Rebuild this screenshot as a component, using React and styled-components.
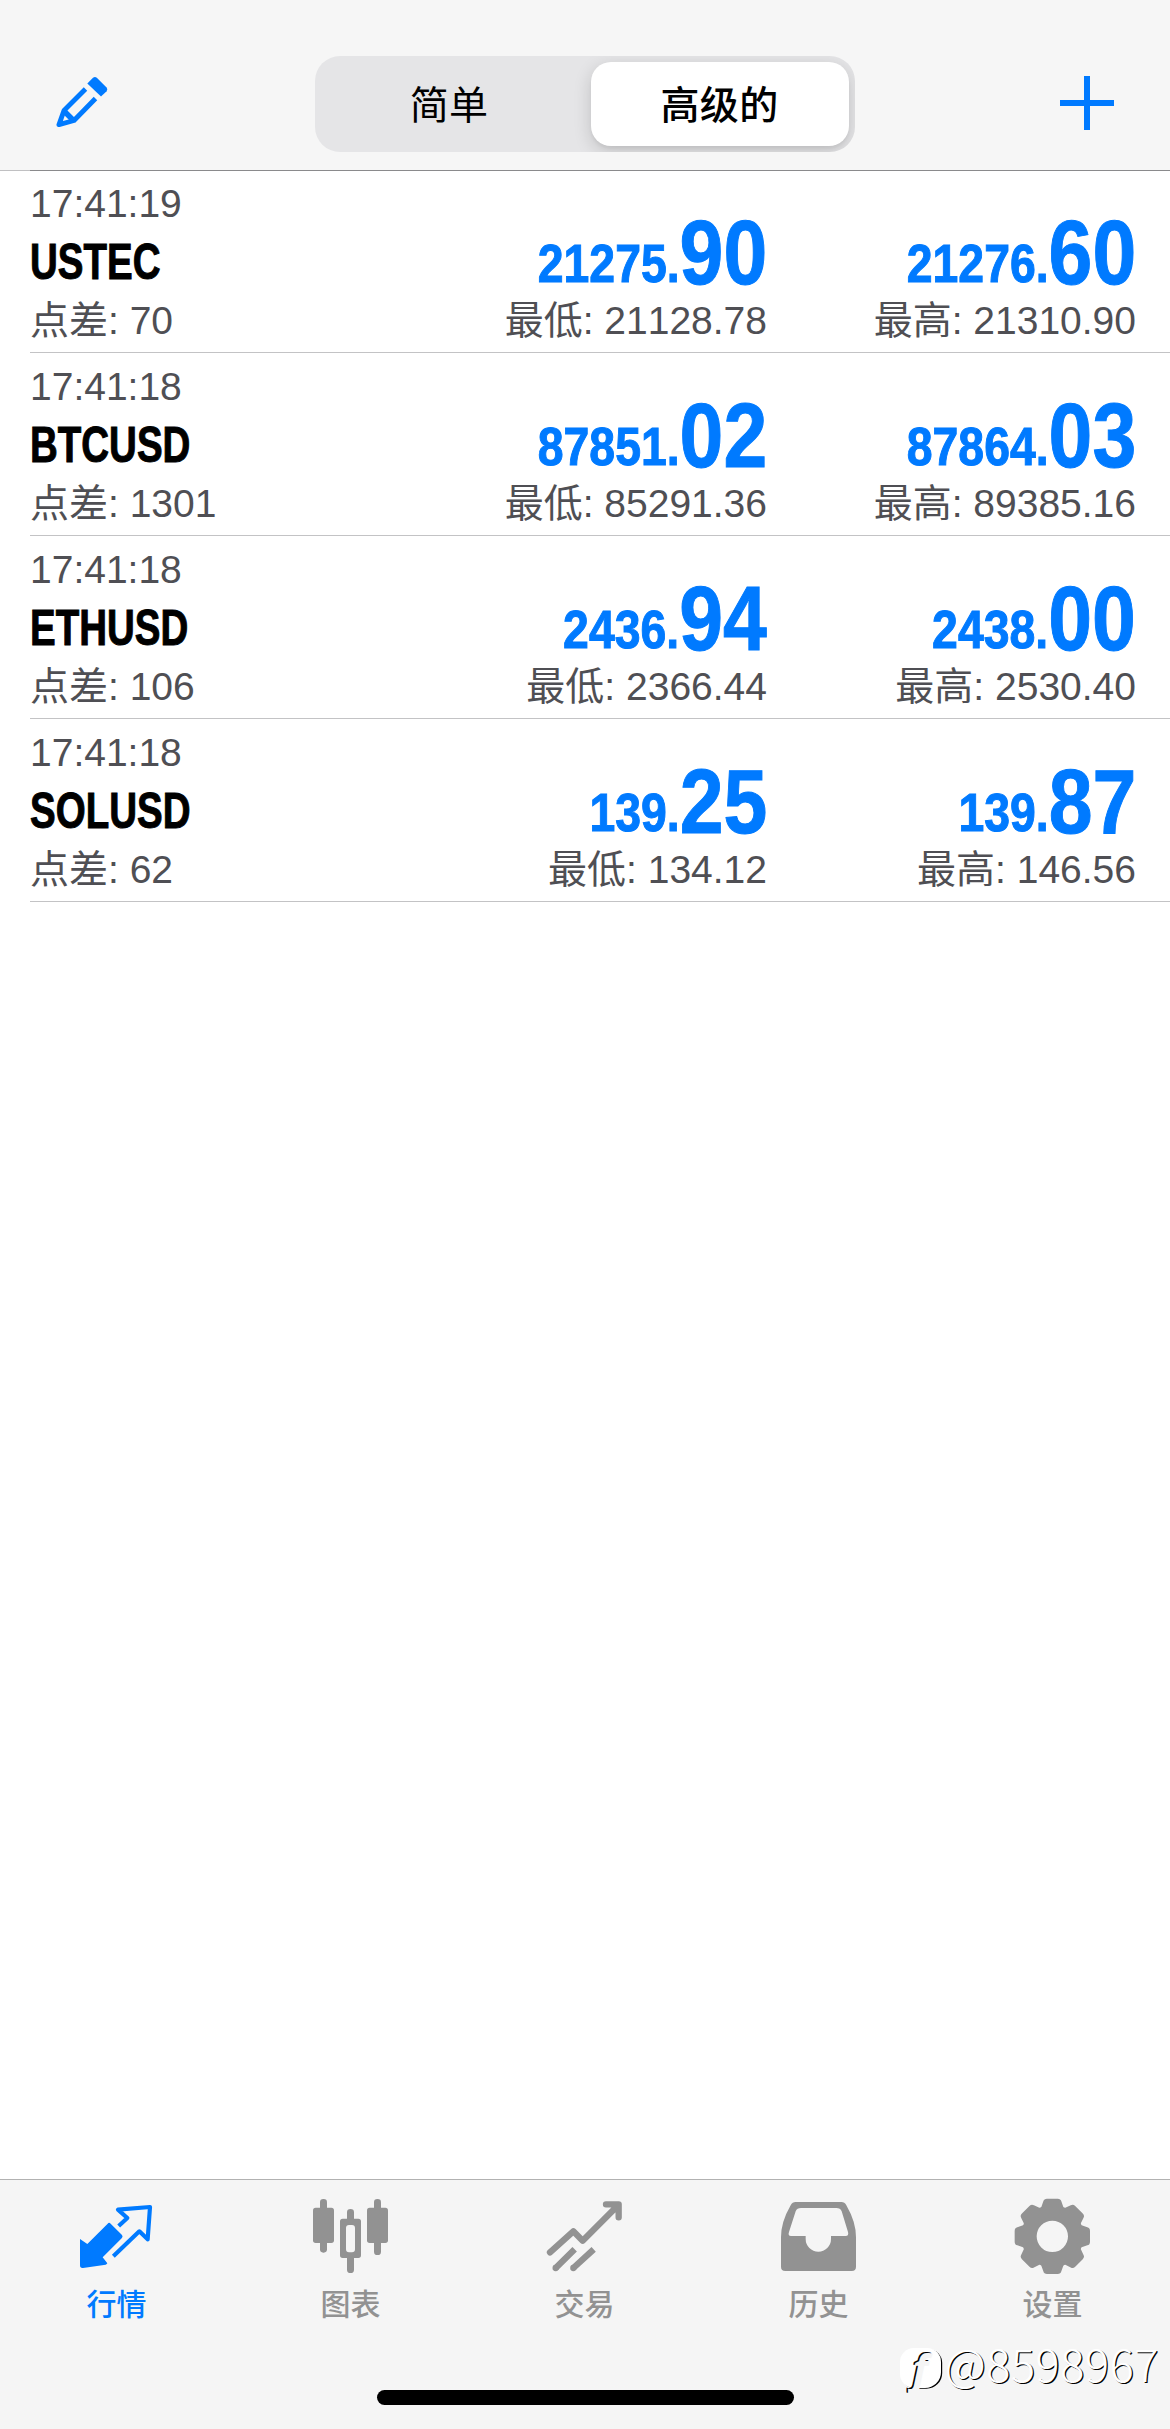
import React from "react";
import styled, { createGlobalStyle } from "styled-components";

const BLUE = "#007aff";
const GREY = "#929292";

const GlobalStyle = createGlobalStyle`
  * { box-sizing: border-box; }
  body {
    margin: 0;
    background: #fff;
    font-family: "Liberation Sans", "Noto Sans CJK SC", sans-serif;
    font-kerning: none;
  }
`;

const Screen = styled.div`
  position: relative;
  display: flex;
  flex-direction: column;
  width: 1170px;
  height: 2429px;
  overflow: hidden;
  background: #fff;
`;

const Header = styled.header`
  display: grid;
  grid-template-columns: 1fr 540px 1fr;
  align-items: center;
  height: 170px;
  padding: 38px 56px 0;
  background: #f6f6f6;
`;

const IconButton = styled.button`
  display: flex;
  justify-self: ${(p) => p.$align};
  padding: 0 0 2px;
  border: 0;
  background: none;
  color: ${BLUE};
`;

const Segmented = styled.div`
  display: grid;
  grid-template-columns: 1fr 258px;
  height: 96px;
  padding: 6px;
  border-radius: 25px;
  background: #e5e5e7;
  overflow: hidden;
`;

const Segment = styled.div`
  display: flex;
  align-items: center;
  justify-content: center;
  padding: 0 ${(p) => (p.$active ? 1 : 14)}px 3px 0;
  border-radius: 20px;
  background: ${(p) => (p.$active ? "#fff" : "transparent")};
  box-shadow: ${(p) => (p.$active ? "0 5px 18px rgba(0,0,0,.16), 0 3px 3px rgba(0,0,0,.04)" : "none")};
  font: ${(p) => (p.$active ? 500 : 400)} 39px/1 "Noto Sans CJK SC", sans-serif;
  letter-spacing: 0.3px;
  color: #000;
`;

const List = styled.main`
  display: flex;
  flex-direction: column;
  flex: 1;
  background: linear-gradient(90deg, #c0c0c2 30px, #8a8a8c 30px) top / 100% 1px no-repeat;
  padding-top: 1px;
`;

const Row = styled.article`
  display: grid;
  grid-template-columns: 1fr 369px 369px;
  height: ${(p) => (p.$first ? 182 : 183)}px;
  margin-left: 30px;
  padding-right: 34px;
  border-bottom: 1px solid #c3c3c5;
`;

const Cell = styled.div`
  display: flex;
  flex-direction: column;
  align-items: ${(p) => (p.$right ? "flex-end" : "flex-start")};
  justify-content: flex-end;
  padding-bottom: 6px;
  white-space: nowrap;
`;

const Meta = styled.span`
  font-size: 39px;
  line-height: 50px;
  color: #4f4f54;
`;

const Name = styled.span`
  height: 67px;
  font-size: 50px;
  font-weight: 700;
  line-height: 67px;
  color: #000;
  -webkit-text-stroke: 1px #000;
  transform: scaleX(0.77);
  transform-origin: left;
`;

const Price = styled.span`
  height: 64px;
  font-size: 53px;
  font-weight: 700;
  line-height: 64px;
  color: ${BLUE};
  -webkit-text-stroke: 1px ${BLUE};
  transform: scaleX(0.875);
  transform-origin: right;
`;

const Pips = styled.span`
  font-size: 90px;
  line-height: 1px;
  vertical-align: -2px;
`;

const TabBar = styled.nav`
  display: grid;
  grid-template-columns: repeat(5, 1fr);
  height: 250px;
  padding-top: 16px;
  border-top: 1px solid #b2b2b2;
  background: #f5f5f5;
`;

const Tab = styled.div`
  display: flex;
  flex-direction: column;
  align-items: center;
  color: ${(p) => (p.$active ? BLUE : GREY)};
`;

const TabLabel = styled.span`
  margin-top: 5px;
  padding-right: 1px;
  font: 500 30px/34px "Noto Sans CJK SC", sans-serif;
`;

const HomeIndicator = styled.div`
  position: absolute;
  left: 377px;
  bottom: 24px;
  width: 417px;
  height: 15px;
  border-radius: 8px;
  background: #000;
`;

const Watermark = styled.div`
  position: absolute;
  right: 11px;
  bottom: 37px;
  display: flex;
  align-items: center;
  gap: 4px;
  height: 48px;
  font: 300 45px/48px "Noto Sans CJK SC", sans-serif;
  color: #fff;
  text-shadow: 1.3px 1.3px 0 #000;
`;

const Handle = styled.span`
  padding-bottom: 10px;
  letter-spacing: 0.6px;
`;

const Badge = styled.span`
  display: flex;
  align-items: center;
  justify-content: center;
  width: 41px;
  height: 40px;
  border-radius: 14px 14px 16px 14px;
  background: #fff;
  box-shadow: 1.5px 1px 0 -0.3px #000;
  font: italic 700 42px/40px "Open Sans", sans-serif;
  color: #f5f5f5;
  text-shadow: -1.3px -1px 0 #000;
`;

const PencilIcon = () => (
  <svg width="52" height="54" viewBox="56 76 52 54" fill="none">
    <path d="M87.3 83.500 93 77.800Q95 76.400 96.800 77.800L106.600 87.600Q108 89.400 106.600 91.200L101 96.600Z" fill="currentColor" />
    <path d="M85.500 89 64 110.500 59 124.600 74 120.500 95.500 98.500" stroke="currentColor" strokeWidth="4.900" strokeLinejoin="round" />
    <path d="M64 111 74 121" stroke="currentColor" strokeWidth="5.500" />
  </svg>
);

const PlusIcon = () => (
  <svg width="54" height="54" viewBox="0 0 54 54" fill="currentColor">
    <path d="M24 0h6v24h24v6H30v24h-6V30H0v-6h24z" />
  </svg>
);

const TabSvg = ({ children }) => (
  <svg width="84" height="84" viewBox="0 0 252 252" fill="currentColor">{children}</svg>
);

const QuotesIcon = () => (
  <TabSvg>
    <path d="M15 129 37 144 98 83Q102 78 107 83L141 117Q145 122 140 127L83 184 97 202Q96 205 92 206L24 216Q15 217 15 208Z" />
    <path d="M131 90 157 66 129 41 225 33 218 130 193 106 115 181" fill="none" stroke="currentColor" strokeWidth="12.500" strokeLinejoin="round" />
  </TabSvg>
);

const ChartIcon = () => (
  <TabSvg>
    <rect x="12" y="35" width="63" height="106" rx="8" />
    <rect x="33" y="9" width="21" height="161" rx="10" />
    <path fillRule="evenodd" d="M101 68H148Q156 68 156 76V178Q156 186 148 186H101Q93 186 93 178V76Q93 68 101 68ZM120 87Q111 87 111 96V160Q111 169 120 169H129Q138 169 138 160V96Q138 87 129 87Z" />
    <path d="M114 75V49Q114 39 124.500 39T135 49V75ZM114 180V221Q114 231 124.500 231T135 221V180Z" />
    <rect x="174" y="35" width="63" height="106" rx="8" />
    <rect x="195" y="9" width="21" height="168" rx="10" />
  </TabSvg>
);

const TradeIcon = () => (
  <TabSvg>
    <g fill="none" stroke="currentColor" strokeWidth="19">
      <path d="M21 169 91 106 119 134 226 27M189 25H227V64" strokeLinecap="round" strokeLinejoin="round" />
      <path d="M38 216 95 160M91 216 152 160" />
    </g>
    <circle cx="38" cy="216" r="9.500" />
    <circle cx="91" cy="216" r="9.500" />
  </TabSvg>
);

const HistoryIcon = () => (
  <TabSvg>
    <path fillRule="evenodd" d="M56 18H193Q203 18 208 28Q237 78 237 124V212Q237 225 224 225H25Q12 225 12 212V124Q12 78 41 28Q46 18 56 18ZM72 36Q60 36 56 46L36 108Q32 120 42 120H86V129A38 38 0 0 0 162 129V120H206Q216 120 213 108L194 46Q190 36 178 36Z" />
  </TabSvg>
);

const gearPath = () => {
  const tooth = [[-33, -88], [-27, -105], [-25, -113], [-16, -113], [16, -113], [25, -113], [27, -105], [33, -88], [35.5, -85.5]];
  const cmds = [];
  for (let i = 0; i < 8; i += 1) {
    const a = (i * Math.PI) / 4;
    const p = tooth.map(([x, y]) => `${(124 + x * Math.cos(a) - y * Math.sin(a)).toFixed(1)} ${(121 + x * Math.sin(a) + y * Math.cos(a)).toFixed(1)}`);
    cmds.push(`${i ? "" : "M"}${p[0]}L${p[1]}Q${p[2]} ${p[3]}L${p[4]}Q${p[5]} ${p[6]}L${p[7]}Q${p[8]} `);
  }
  return `${cmds.join("")}91 33ZM171 121A47 47 0 1 0 77 121A47 47 0 1 0 171 121Z`;
};

const SettingsIcon = () => (
  <TabSvg>
    <path fillRule="evenodd" d={gearPath()} />
  </TabSvg>
);

const quotes = [
  { time: "17:41:19", name: "USTEC", spread: "70", bid: ["21275.", "90"], low: "21128.78", ask: ["21276.", "60"], high: "21310.90" },
  { time: "17:41:18", name: "BTCUSD", spread: "1301", bid: ["87851.", "02"], low: "85291.36", ask: ["87864.", "03"], high: "89385.16" },
  { time: "17:41:18", name: "ETHUSD", spread: "106", bid: ["2436.", "94"], low: "2366.44", ask: ["2438.", "00"], high: "2530.40" },
  { time: "17:41:18", name: "SOLUSD", spread: "62", bid: ["139.", "25"], low: "134.12", ask: ["139.", "87"], high: "146.56" },
];

const tabs = [
  { label: "行情", Icon: QuotesIcon, active: true },
  { label: "图表", Icon: ChartIcon },
  { label: "交易", Icon: TradeIcon },
  { label: "历史", Icon: HistoryIcon },
  { label: "设置", Icon: SettingsIcon },
];

const PriceCell = ({ price, note }) => (
  <Cell $right>
    <Price>
      {price[0]}
      <Pips>{price[1]}</Pips>
    </Price>
    <Meta>{note}</Meta>
  </Cell>
);

export default function App() {
  return (
    <Screen>
      <GlobalStyle />
      <Header>
        <IconButton $align="start" aria-label="编辑"><PencilIcon /></IconButton>
        <Segmented>
          <Segment>简单</Segment>
          <Segment $active>高级的</Segment>
        </Segmented>
        <IconButton $align="end" aria-label="添加"><PlusIcon /></IconButton>
      </Header>
      <List>
        {quotes.map((q, i) => (
          <Row key={q.name} $first={i === 0}>
            <Cell>
              <Meta>{q.time}</Meta>
              <Name>{q.name}</Name>
              <Meta>点差: {q.spread}</Meta>
            </Cell>
            <PriceCell price={q.bid} note={`最低: ${q.low}`} />
            <PriceCell price={q.ask} note={`最高: ${q.high}`} />
          </Row>
        ))}
      </List>
      <TabBar>
        {tabs.map(({ label, Icon, active }) => (
          <Tab key={label} $active={active}>
            <Icon />
            <TabLabel>{label}</TabLabel>
          </Tab>
        ))}
      </TabBar>
      <HomeIndicator />
      <Watermark>
        <Badge>f</Badge>
        <Handle>@8598967</Handle>
      </Watermark>
    </Screen>
  );
}
